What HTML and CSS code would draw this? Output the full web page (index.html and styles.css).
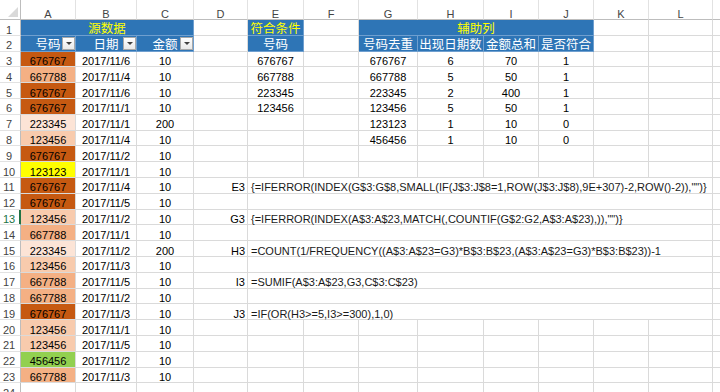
FILE: index.html
```html
<!DOCTYPE html>
<html lang="zh-CN">
<head>
<meta charset="utf-8">
<title>Sheet</title>
<link rel="stylesheet" href="styles.css">
</head>
<body>
<div class="sheet">
  <div class="ch corner"><span class="tri"></span></div><div class="ch">A</div><div class="ch">B</div><div class="ch">C</div><div class="ch">D</div><div class="ch">E</div><div class="ch">F</div><div class="ch">G</div><div class="ch">H</div><div class="ch">I</div><div class="ch">J</div><div class="ch">K</div><div class="ch">L</div><div class="ch"></div>

  <div class="rh">1</div><div class="blue ttl s3">源数据</div><div></div><div class="blue ttl">符合条件</div><div></div><div class="blue ttl s4">辅助列</div><div></div><div></div><div></div>

  <div class="rh">2</div><div class="blue sub">号码<span class="dd"></span></div><div class="blue sub">日期<span class="dd"></span></div><div class="blue sub">金额<span class="dd"></span></div><div></div><div class="blue sub">号码</div><div></div><div class="blue sub">号码去重</div><div class="blue sub">出现日期数</div><div class="blue sub">金额总和</div><div class="blue sub">是否符合</div><div></div><div></div><div></div>

  <div class="rh">3</div><div class="f-dk">676767</div><div>2017/11/6</div><div>10</div><div></div><div>676767</div><div></div><div>676767</div><div>6</div><div>70</div><div>1</div><div></div><div></div><div></div>
  <div class="rh">4</div><div class="f-md">667788</div><div>2017/11/4</div><div>10</div><div></div><div>667788</div><div></div><div>667788</div><div>5</div><div>50</div><div>1</div><div></div><div></div><div></div>
  <div class="rh">5</div><div class="f-dk">676767</div><div>2017/11/6</div><div>10</div><div></div><div>223345</div><div></div><div>223345</div><div>2</div><div>400</div><div>1</div><div></div><div></div><div></div>
  <div class="rh">6</div><div class="f-dk">676767</div><div>2017/11/1</div><div>10</div><div></div><div>123456</div><div></div><div>123456</div><div>5</div><div>50</div><div>1</div><div></div><div></div><div></div>
  <div class="rh">7</div><div class="f-pl">223345</div><div>2017/11/1</div><div>200</div><div></div><div></div><div></div><div>123123</div><div>1</div><div>10</div><div>0</div><div></div><div></div><div></div>
  <div class="rh">8</div><div class="f-lt">123456</div><div>2017/11/4</div><div>10</div><div></div><div></div><div></div><div>456456</div><div>1</div><div>10</div><div>0</div><div></div><div></div><div></div>
  <div class="rh">9</div><div class="f-dk">676767</div><div>2017/11/2</div><div>10</div><div></div><div></div><div></div><div></div><div></div><div></div><div></div><div></div><div></div><div></div>
  <div class="rh">10</div><div class="f-ye">123123</div><div>2017/11/1</div><div>10</div><div></div><div></div><div></div><div></div><div></div><div></div><div></div><div></div><div></div><div></div>

  <div class="rh">11</div><div class="f-dk">676767</div><div>2017/11/4</div><div>10</div><div class="lbl">E3</div><div class="fx s8">{=IFERROR(INDEX(G$3:G$8,SMALL(IF(J$3:J$8=1,ROW(J$3:J$8),9E+307)-2,ROW()-2)),"")}</div><div></div>
  <div class="rh">12</div><div class="f-dk">676767</div><div>2017/11/5</div><div>10</div><div></div><div class="fx s8"></div><div></div>
  <div class="rh sel">13</div><div class="f-lt">123456</div><div>2017/11/2</div><div>10</div><div class="lbl">G3</div><div class="fx s8">{=IFERROR(INDEX(A$3:A$23,MATCH(,COUNTIF(G$2:G2,A$3:A$23),)),"")}</div><div></div>
  <div class="rh">14</div><div class="f-md">667788</div><div>2017/11/1</div><div>10</div><div></div><div class="fx s8"></div><div></div>
  <div class="rh">15</div><div class="f-pl">223345</div><div>2017/11/2</div><div>200</div><div class="lbl">H3</div><div class="fx s8">=COUNT(1/FREQUENCY((A$3:A$23=G3)*B$3:B$23,(A$3:A$23=G3)*B$3:B$23))-1</div><div></div>
  <div class="rh">16</div><div class="f-lt">123456</div><div>2017/11/3</div><div>10</div><div></div><div class="fx s8"></div><div></div>
  <div class="rh">17</div><div class="f-md">667788</div><div>2017/11/5</div><div>10</div><div class="lbl">I3</div><div class="fx s8">=SUMIF(A$3:A$23,G3,C$3:C$23)</div><div></div>
  <div class="rh">18</div><div class="f-md">667788</div><div>2017/11/2</div><div>10</div><div></div><div class="fx s8"></div><div></div>
  <div class="rh">19</div><div class="f-dk">676767</div><div>2017/11/3</div><div>10</div><div class="lbl">J3</div><div class="fx s8">=IF(OR(H3&gt;=5,I3&gt;=300),1,0)</div><div></div>

  <div class="rh">20</div><div class="f-lt">123456</div><div>2017/11/1</div><div>10</div><div></div><div></div><div></div><div></div><div></div><div></div><div></div><div></div><div></div><div></div>
  <div class="rh">21</div><div class="f-lt">123456</div><div>2017/11/5</div><div>10</div><div></div><div></div><div></div><div></div><div></div><div></div><div></div><div></div><div></div><div></div>
  <div class="rh">22</div><div class="f-gr">456456</div><div>2017/11/2</div><div>10</div><div></div><div></div><div></div><div></div><div></div><div></div><div></div><div></div><div></div><div></div>
  <div class="rh">23</div><div class="f-md">667788</div><div>2017/11/3</div><div>10</div><div></div><div></div><div></div><div></div><div></div><div></div><div></div><div></div><div></div><div></div>
  <div class="rh">24</div><div></div><div></div><div></div><div></div><div></div><div></div><div></div><div></div><div></div><div></div><div></div><div></div><div></div>
</div>
</body>
</html>
```

FILE: styles.css
```css
html, body {
  margin: 0;
  padding: 0;
  background: #ffffff;
  overflow: hidden;
}

body {
  font-family: "Liberation Sans", "Noto Sans CJK SC", sans-serif;
  font-size: 11px;
  color: #000000;
}

.sheet {
  display: grid;
  grid-template-columns: 21px 55px 61px 57px 54px 56px 55px 59px 66px 55px 55px 55px 64px 40px;
  grid-template-rows: 20px;
  grid-auto-rows: 15.8px;
  width: 753px;
}

.sheet > div {
  box-sizing: border-box;
  position: relative;
  border-right: 1px solid #dadada;
  border-bottom: 1px solid #dadada;
  white-space: nowrap;
  text-align: center;
  line-height: 14px;
  padding-top: 2.5px;
  min-width: 0;
}

/* headers */
.sheet > .ch {
  color: #444444;
  padding-top: 6.5px;
  border-right-color: #e2e2e2;
  border-bottom-color: #bdbdbd;
}

.sheet > .corner {
  border-right-color: #bdbdbd;
}

.tri {
  position: absolute;
  right: 2px;
  bottom: 2px;
  width: 0;
  height: 0;
  border-left: 10px solid transparent;
  border-bottom: 10px solid #d9d9d9;
}

.sheet > .rh {
  color: #444444;
  border-right-color: #bdbdbd;
  border-bottom-color: #e2e2e2;
  text-align: center;
  padding-right: 2px;
}

.sheet > .rh.sel {
  color: #217346;
  box-shadow: inset -1px 0 0 #217346;
  border-right-color: #217346;
}

/* blue table headers */
.sheet > .blue {
  background: #2e75b6;
  border-right-color: #6f9fcf;
  border-bottom-color: #6f9fcf;
  font-size: 12.5px;
  padding-top: 2px;
}

.ttl { color: #ffff00; }
.sub { color: #ffffff; }

.s3 { grid-column: span 3; }
.s4 { grid-column: span 4; }
.s8 { grid-column: span 8; }

.dd {
  position: absolute;
  right: 0;
  top: 1px;
  width: 13px;
  height: 13px;
  box-sizing: border-box;
  border: 1px solid #a9a9a9;
  background: linear-gradient(#ffffff, #e9e9e9);
}

.dd::after {
  content: "";
  position: absolute;
  left: 3px;
  top: 4px;
  width: 0;
  height: 0;
  border-left: 3px solid transparent;
  border-right: 3px solid transparent;
  border-top: 3px solid #404040;
}

/* conditional fills */
.f-dk { background: #c65911; }
.f-md { background: #f4b084; }
.f-lt { background: #f8cbad; }
.f-pl { background: #fce4d6; }
.f-ye { background: #ffff00; }
.f-gr { background: #92d050; }

/* formula notes */
.sheet > .lbl {
  text-align: right;
  padding-right: 2px;
}

.sheet > .fx {
  text-align: left;
  padding-left: 3px;
  color: #1a1a1a;
}
```
